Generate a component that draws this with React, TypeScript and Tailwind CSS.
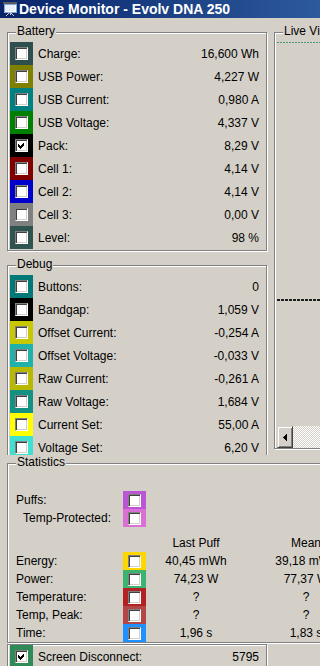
import React from 'react';

type Row = { label: string; value: string; swatch: string; checked?: boolean };

const battery: Row[] = [
  { label: 'Charge:', value: '16,600 Wh', swatch: 'bg-[#2f4f4f]' },
  { label: 'USB Power:', value: '4,227 W', swatch: 'bg-[#808000]' },
  { label: 'USB Current:', value: '0,980 A', swatch: 'bg-[#008080]' },
  { label: 'USB Voltage:', value: '4,337 V', swatch: 'bg-[#008000]' },
  { label: 'Pack:', value: '8,29 V', swatch: 'bg-[#000000]', checked: true },
  { label: 'Cell 1:', value: '4,14 V', swatch: 'bg-[#800000]' },
  { label: 'Cell 2:', value: '4,14 V', swatch: 'bg-[#0000cd]' },
  { label: 'Cell 3:', value: '0,00 V', swatch: 'bg-[#808080]' },
  { label: 'Level:', value: '98 %', swatch: 'bg-[#2f5450]' },
];

const debug: Row[] = [
  { label: 'Buttons:', value: '0', swatch: 'bg-[#007878]' },
  { label: 'Bandgap:', value: '1,059 V', swatch: 'bg-[#000000]' },
  { label: 'Offset Current:', value: '-0,254 A', swatch: 'bg-[#c8c800]' },
  { label: 'Offset Voltage:', value: '-0,033 V', swatch: 'bg-[#20b2aa]' },
  { label: 'Raw Current:', value: '-0,261 A', swatch: 'bg-[#b8b800]' },
  { label: 'Raw Voltage:', value: '1,684 V', swatch: 'bg-[#139183]' },
  { label: 'Current Set:', value: '55,00 A', swatch: 'bg-[#ffff00]' },
  { label: 'Voltage Set:', value: '6,20 V', swatch: 'bg-[#40e0d0]' },
];

const stats = [
  { label: 'Energy:', last: '40,45 mWh', mean: '39,18 mWh', swatch: 'bg-[#ffd700]' },
  { label: 'Power:', last: '74,23 W', mean: '77,37 W', swatch: 'bg-[#3cb371]' },
  { label: 'Temperature:', last: '?', mean: '?', swatch: 'bg-[#b22222]' },
  { label: 'Temp, Peak:', last: '?', mean: '?', swatch: 'bg-[#b34747]' },
  { label: 'Time:', last: '1,96 s', mean: '1,83 s', swatch: 'bg-[#1e90ff]' },
];

function CheckBox({ checked }: { checked?: boolean }) {
  return (
    <span className="relative block w-[13px] h-[13px] bg-white border border-t-[#808080] border-l-[#808080] border-r-white border-b-white shadow-[inset_1px_1px_0_#404040,inset_-1px_-1px_0_#d4d0c8]">
      {checked && (
        <svg className="absolute left-0 top-0" width="11" height="11" viewBox="0 0 11 11" shapeRendering="crispEdges">
          <polygon points="2,4 4,6 8,2 8,5 4,9 2,7" fill="#000" />
        </svg>
      )}
    </span>
  );
}

function Group({ label, className, children }: { label?: string; className?: string; children?: React.ReactNode }) {
  return (
    <div className={`relative border border-[#808080] shadow-[inset_1px_1px_0_#fff,1px_1px_0_#fff] ${className ?? ''}`}>
      {label && (
        <span className="absolute -top-[9px] left-[8px] px-[1px] leading-[14px] bg-[#d4d0c8] whitespace-nowrap">
          {label}
        </span>
      )}
      {children}
    </div>
  );
}

function DataRow({ row }: { row: Row }) {
  return (
    <div className="flex items-center h-[23px] pr-[7px]">
      <div className={`ml-[2px] w-[23px] h-full shrink-0 flex items-center justify-center ${row.swatch}`}>
        <CheckBox checked={row.checked} />
      </div>
      <span className="ml-[5px] leading-[14px] whitespace-nowrap">{row.label}</span>
      <span className="ml-auto leading-[14px] whitespace-nowrap">{row.value}</span>
    </div>
  );
}

function TitleBar() {
  return (
    <div className="h-[18px] flex items-center bg-linear-to-r from-[#0a246a] to-[#2d5a9c] pb-[1px]">
      <svg className="ml-[2px] shrink-0" width="16" height="16" viewBox="0 0 16 16" shapeRendering="crispEdges">
        <rect x="1" y="1" width="14" height="2" fill="#5a5a5a" />
        <rect x="2" y="3" width="12" height="8" fill="#ffffff" stroke="#8aa6d6" strokeWidth="1" />
        <rect x="3" y="4" width="10" height="6" fill="#e8f0ff" />
        <path d="M8 11 L4 15 M8 11 L12 15 M8 11 L8 14" stroke="#c8c8c8" strokeWidth="1" fill="none" />
      </svg>
      <span className="ml-[1px] text-white font-bold text-[14px] leading-[16px] whitespace-nowrap">
        Device Monitor - Evolv DNA 250
      </span>
    </div>
  );
}

export default function App() {
  return (
    <div className="w-[320px] h-[666px] overflow-hidden bg-[#d4d0c8] text-black text-[12px] font-['Liberation_Sans',Arial,sans-serif]">
      <TitleBar />

      {/* Battery, Debug and the live view */}
      <div className="flex items-start h-[437px] overflow-hidden pl-[7px] pt-[14px]">
        <div className="w-[260px] shrink-0 flex flex-col">
          <Group label="Battery" className="h-[219px] pt-[9px]">
            {battery.map((r) => (
              <DataRow key={r.label} row={r} />
            ))}
          </Group>
          <Group label="Debug" className="mt-[14px] h-[220px] pt-[9px]">
            {debug.map((r) => (
              <DataRow key={r.label} row={r} />
            ))}
          </Group>
        </div>

        <Group label="Live View" className="ml-[7px] w-[80px] h-[417px] shrink-0 flex flex-col pl-[2px]">
          {/* chart traces */}
          <svg className="block shrink-0" width="78" height="391" viewBox="0 0 78 391">
            <line x1="0" y1="9.5" x2="78" y2="9.5" stroke="#4d9a78" strokeWidth="1" strokeDasharray="2 1" />
            <line x1="0" y1="267" x2="78" y2="267" stroke="#1e1e1e" strokeWidth="2" strokeDasharray="3 1" />
          </svg>
          <div className="flex-1" />
          <div className="flex h-[22px] shrink-0">
            <div className="w-[16px] h-full flex items-center justify-center bg-[#d4d0c8] border border-t-[#d4d0c8] border-l-[#d4d0c8] border-r-[#404040] border-b-[#404040] shadow-[inset_1px_1px_0_#fff,inset_-1px_-1px_0_#808080]">
              <svg width="4" height="7" viewBox="0 0 4 7" shapeRendering="crispEdges">
                <polygon points="4,0 4,7 0,3.5" fill="#000" />
              </svg>
            </div>
            <div className="flex-1 bg-[repeating-conic-gradient(#ffffff_0_25%,#d4d0c8_0_50%)] bg-size-[2px_2px]" />
          </div>
        </Group>
      </div>

      {/* Statistics */}
      <div className="h-[189px] pl-[7px] pt-[8px]">
        <Group label="Statistics" className="w-[330px] h-[180px] pt-[27px] pl-[8px]">
          <div className="flex items-center h-[18px]">
            <span className="w-[107px] shrink-0 leading-[14px]">Puffs:</span>
            <div className="w-[23px] h-full shrink-0 flex items-center justify-center bg-[#ba55d3]">
              <CheckBox />
            </div>
          </div>
          <div className="flex items-center h-[18px]">
            <span className="w-[107px] shrink-0 pl-[7px] leading-[14px]">Temp-Protected:</span>
            <div className="w-[23px] h-full shrink-0 flex items-center justify-center bg-[#da70d6]">
              <CheckBox />
            </div>
          </div>
          <div className="mt-[7px] flex items-center h-[18px]">
            <span className="w-[130px] shrink-0" />
            <span className="w-[100px] shrink-0 text-center leading-[14px]">Last Puff</span>
            <span className="w-[120px] shrink-0 text-center leading-[14px]">Mean</span>
          </div>
          {stats.map((s) => (
            <div key={s.label} className="flex items-center h-[18px]">
              <span className="w-[107px] shrink-0 leading-[14px]">{s.label}</span>
              <div className={`w-[23px] h-full shrink-0 flex items-center justify-center ${s.swatch}`}>
                <CheckBox />
              </div>
              <span className="w-[100px] shrink-0 text-center leading-[14px] whitespace-nowrap">{s.last}</span>
              <span className="w-[120px] shrink-0 text-center leading-[14px] whitespace-nowrap">{s.mean}</span>
            </div>
          ))}
        </Group>
      </div>

      {/* Screen disconnect */}
      <div className="pl-[7px]">
        <Group className="w-[260px] h-[40px]">
          <DataRow row={{ label: 'Screen Disconnect:', value: '5795', swatch: 'bg-[#2e8b57]', checked: true }} />
        </Group>
      </div>
    </div>
  );
}
